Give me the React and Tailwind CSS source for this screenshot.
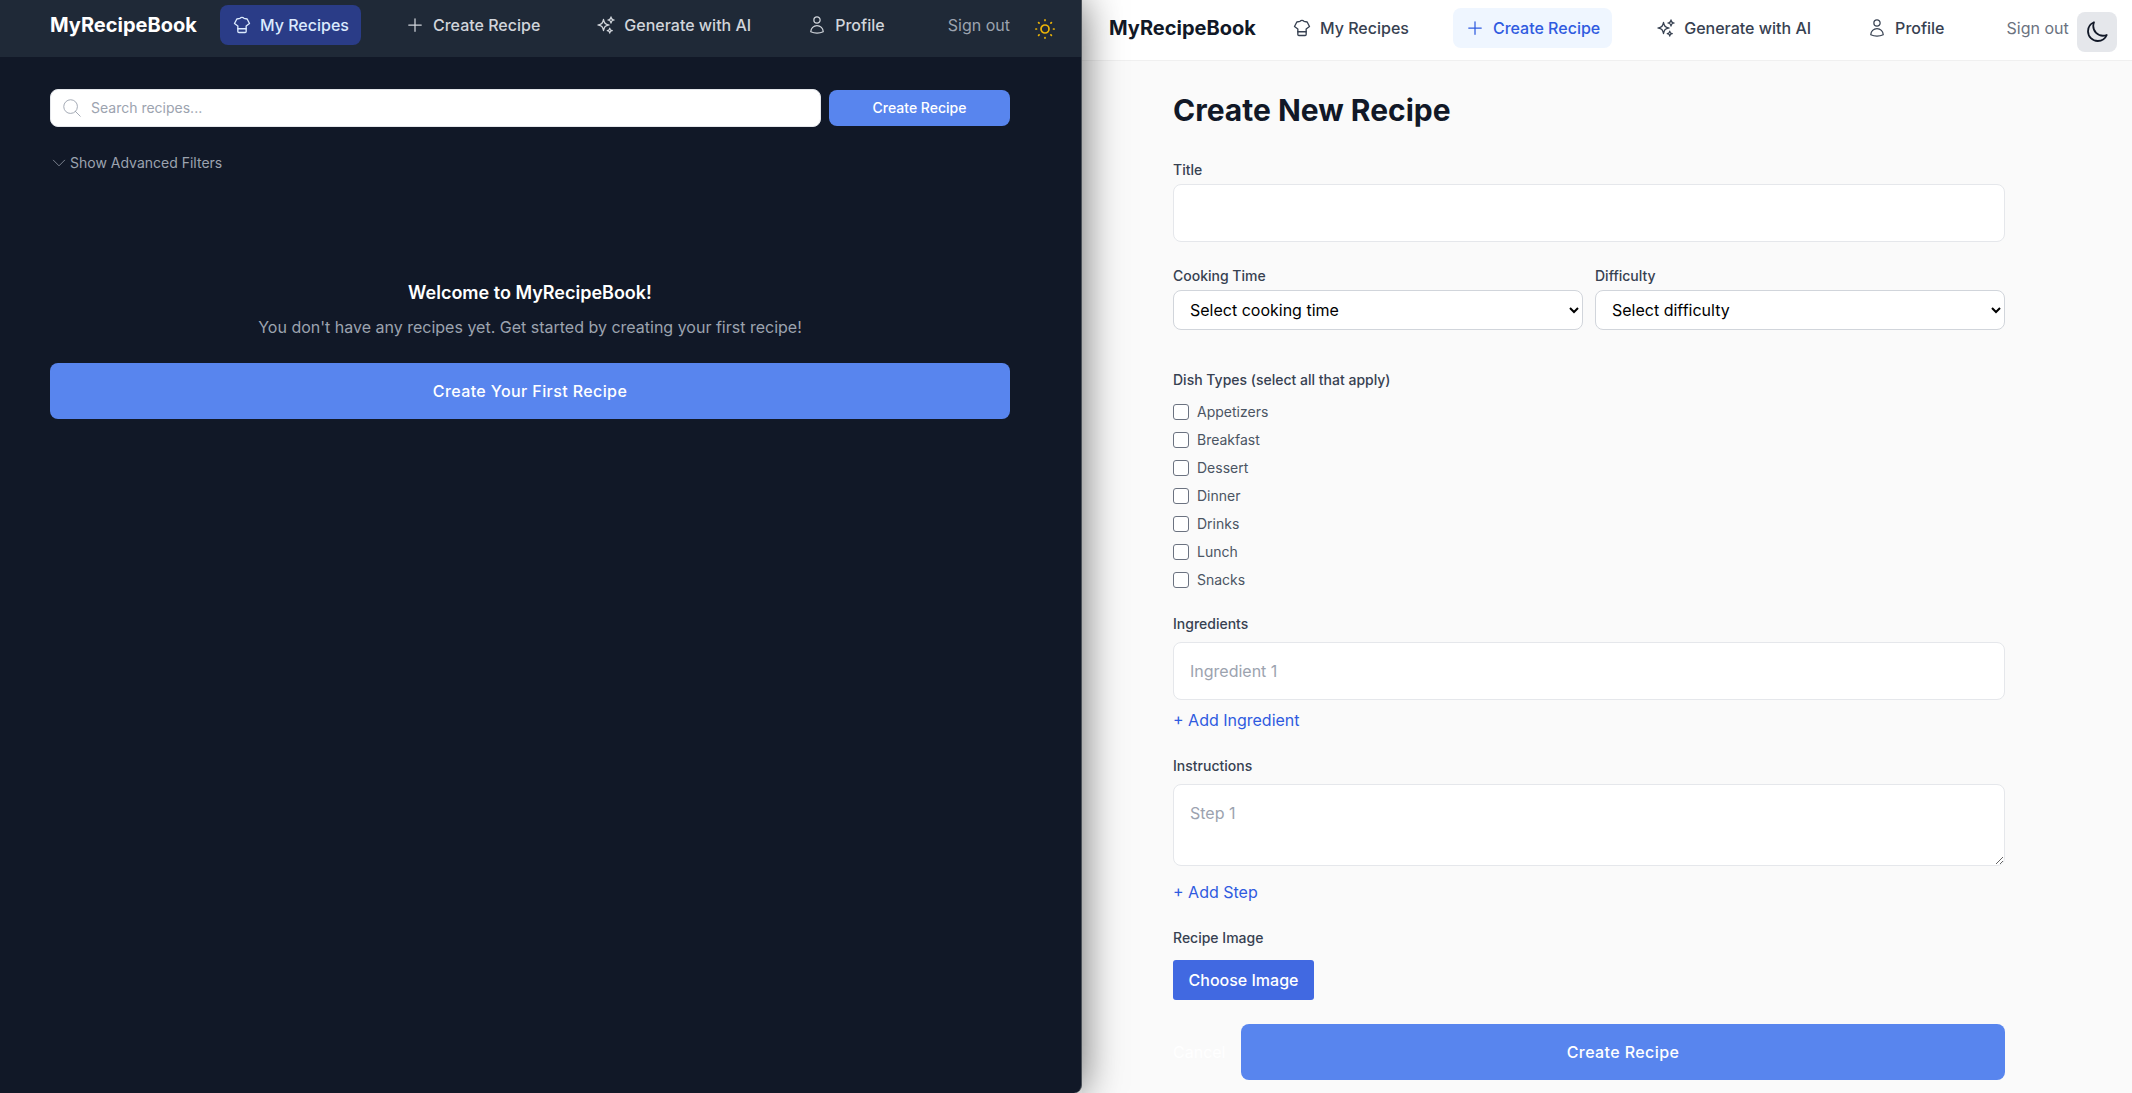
import React from "react";
import { HiOutlineSparkles, HiOutlineUser, HiOutlinePlus, HiOutlineMagnifyingGlass, HiOutlineChevronDown } from "react-icons/hi2";

const F = { fontFamily: "Inter, 'Liberation Sans', sans-serif" };

function ChefHatIcon({ size = 20, className = "" }) {
  return (
    <svg width={size} height={size} viewBox="0 0 24 24" fill="none" stroke="currentColor" strokeWidth="1.6" strokeLinejoin="round" strokeLinecap="round" className={className}>
      <path d="M7 16.5V13.2L3 10.2 5.800 4.800 9.500 4C10.200 3.200 11 2.800 12 2.800s1.800.4 2.500 1.200l3.700.8 2.800 5.400-4 3v3.300" />
      <path d="M7 16.500h10v3.200a1.300 1.300 0 0 1-1.300 1.300H8.300A1.300 1.300 0 0 1 7 19.700z" />
    </svg>
  );
}

function SunIcon({ className = "" }) {
  return (
    <svg width="20" height="20" viewBox="0 0 20 20" fill="none" stroke="currentColor" strokeWidth="1.7" strokeLinecap="round" className={className}>
      <circle cx="10" cy="10" r="4" />
      <path d="M10 .9v.6M10 18.500v.6M.9 10h.6M18.500 10h.6M3.600 3.600l.5.5M15.900 15.900l.5.5M3.600 16.400l.5-.5M15.900 4.100l.5-.5" />
    </svg>
  );
}

function MoonIcon() {
  return (
    <svg width="24" height="24" viewBox="0 0 24 24" fill="none" stroke="currentColor" strokeWidth="1.8" strokeLinejoin="round" strokeLinecap="round">
      <path d="M21.752 15.002A9.72 9.72 0 0 1 18 15.75c-5.385 0-9.75-4.365-9.75-9.75 0-1.33.266-2.597.748-3.752A9.753 9.753 0 0 0 3 11.25C3 16.635 7.365 21 12.750 21a9.753 9.753 0 0 0 9.002-5.998Z" />
    </svg>
  );
}

function NavItem({ icon: Icon, label, cls }) {
  return (
    <div className={`flex items-center gap-2 h-10 px-3 rounded-lg text-base font-medium ${cls}`}>
      <Icon size={20} />
      <span>{label}</span>
    </div>
  );
}

function Label({ children, className = "" }) {
  return <div className={`text-sm font-medium text-[#374151] leading-5 ${className}`}>{children}</div>;
}

function DarkPane() {
  return (
    <div className="relative z-10 w-[1082px] shrink-0 h-full bg-[#111827] border-r border-[#4b5158] rounded-br-lg shadow-[0_0_40px_rgba(0,0,0,0.6)] flex flex-col">
      <header className="h-[57px] shrink-0 bg-[#1f2937] flex items-start pt-[5px] pl-[50px] pr-[26px] gap-8">
        <div className="text-xl font-bold text-white h-10 flex items-center w-[138px]">MyRecipeBook</div>
        <NavItem icon={ChefHatIcon} label="My Recipes" cls="bg-[#2a3c87] text-[#dbeafe] w-[141px]" />
        <NavItem icon={HiOutlinePlus} label="Create Recipe" cls="text-[#d1d5db]" />
        <NavItem icon={HiOutlineSparkles} label="Generate with AI" cls="text-[#d1d5db]" />
        <NavItem icon={HiOutlineUser} label="Profile" cls="text-[#d1d5db]" />
        <div className="ml-auto h-10 flex items-center text-base text-[#9ca3af]">Sign out</div>
        <SunIcon className="text-[#eab308] mt-[14px] -ml-[7px]" />
      </header>
      <main className="pl-[50px] pr-[71px] pt-[32px]">
        <div className="flex gap-2 items-center">
          <div className="flex-1 h-[38px] bg-white rounded-lg border border-[#e5e7eb] flex items-center pl-[10px] gap-2">
            <HiOutlineMagnifyingGlass size={22} strokeWidth={1} className="text-[#9ca3af]" />
            <span className="text-sm text-[#9ca3af]">Search recipes...</span>
          </div>
          <button className="w-[181px] h-[36px] rounded-lg bg-[#5885ee] text-white text-sm font-medium">Create Recipe</button>
        </div>
        <div className="flex items-center gap-[2px] mt-[26px] text-sm leading-5 text-[#9ca3af]">
          <HiOutlineChevronDown size={18} strokeWidth={1} />
          <span>Show Advanced Filters</span>
        </div>
        <div className="mt-[106px] text-center">
          <h2 className="text-lg font-semibold leading-7 text-white">Welcome to MyRecipeBook!</h2>
          <p className="mt-[8px] text-base leading-6 text-[#9ca3af]">You don't have any recipes yet. Get started by creating your first recipe!</p>
          <button className="mt-[24px] w-full h-[56px] rounded-lg bg-[#5885ee] text-white text-base font-medium tracking-wide">Create Your First Recipe</button>
        </div>
      </main>
    </div>
  );
}

const inputCls = "w-full bg-white border border-[#e5e7eb] rounded-lg px-4";
const types = ["Appetizers", "Breakfast", "Dessert", "Dinner", "Drinks", "Lunch", "Snacks"];

function LightPane() {
  return (
    <div className="flex-1 h-full bg-[#fafafa] flex flex-col min-w-0 overflow-hidden">
      <header className="h-[61px] shrink-0 bg-white border-b border-[#f0f0f0] flex items-start pt-[8px] pl-[27px] gap-8">
        <div className="text-xl font-bold text-[#111827] h-10 flex items-center w-[139px]">MyRecipeBook</div>
        <NavItem icon={ChefHatIcon} label="My Recipes" cls="text-[#374151]" />
        <NavItem icon={HiOutlinePlus} label="Create Recipe" cls="bg-[#eff6ff] text-[#2f5be0]" />
        <NavItem icon={HiOutlineSparkles} label="Generate with AI" cls="text-[#374151]" />
        <NavItem icon={HiOutlineUser} label="Profile" cls="text-[#374151]" />
        <div className="ml-[18px] flex items-start gap-2">
          <div className="h-10 flex items-center text-base text-[#6b7280]">Sign out</div>
          <div className="mt-[4px] w-10 h-10 rounded-lg bg-[#e5e7eb] flex items-center justify-center text-[#111827]">
            <MoonIcon />
          </div>
        </div>
      </header>
      <main className="pl-[91px] w-[923px] pt-[31px]">
        <h1 className="text-3xl font-bold leading-9 text-[#111827]">Create New Recipe</h1>
        <Label className="mt-[32px]">Title</Label>
        <input className={`${inputCls} h-[58px] mt-[4px] block`} />
        <div className="grid grid-cols-2 gap-3 mt-[24px]">
          <div>
            <Label>Cooking Time</Label>
            <select className="mt-[4px] w-full h-[40px] bg-white border border-[#d1d5db] rounded-lg px-3 text-base text-black">
              <option>Select cooking time</option>
            </select>
          </div>
          <div>
            <Label>Difficulty</Label>
            <select className="mt-[4px] w-full h-[40px] bg-white border border-[#d1d5db] rounded-lg px-3 text-base text-black">
              <option>Select difficulty</option>
            </select>
          </div>
        </div>
        <Label className="mt-[40px]">Dish Types (select all that apply)</Label>
        <div className="mt-[12px] flex flex-col gap-[8px]">
          {types.map((t) => (
            <label key={t} className="flex items-center gap-2 h-5 text-sm text-[#4b5563]">
              <input type="checkbox" className="appearance-none w-4 h-4 bg-white border border-[#6b7280] rounded-[3px]" />
              <span>{t}</span>
            </label>
          ))}
        </div>
        <Label className="mt-[24px]">Ingredients</Label>
        <input placeholder="Ingredient 1" className={`${inputCls} h-[58px] mt-[8px] block placeholder:text-[#9ca3af]`} />
        <div className="mt-[8px] text-base leading-6 text-[#2f5be0]">+ Add Ingredient</div>
        <Label className="mt-[24px]">Instructions</Label>
        <textarea placeholder="Step 1" className={`${inputCls} h-[82px] mt-[8px] block py-4 placeholder:text-[#9ca3af]`} />
        <div className="mt-[14px] text-base leading-6 text-[#2f5be0]">+ Add Step</div>
        <Label className="mt-[24px]">Recipe Image</Label>
        <button className="mt-[12px] block w-[141px] h-[40px] rounded-[3px] bg-[#4169e1] text-white text-base font-medium">Choose Image</button>
        <div className="flex items-center mt-[24px]">
          <span className="text-base text-white w-[68px]">Cancel</span>
          <button className="flex-1 h-[56px] rounded-lg bg-[#5885ee] text-white text-base font-medium tracking-wide">Create Recipe</button>
        </div>
      </main>
    </div>
  );
}

export default function App() {
  return (
    <div style={F} className="flex w-[2132px] h-[1093px] overflow-hidden bg-white">
      <DarkPane />
      <LightPane />
    </div>
  );
}
